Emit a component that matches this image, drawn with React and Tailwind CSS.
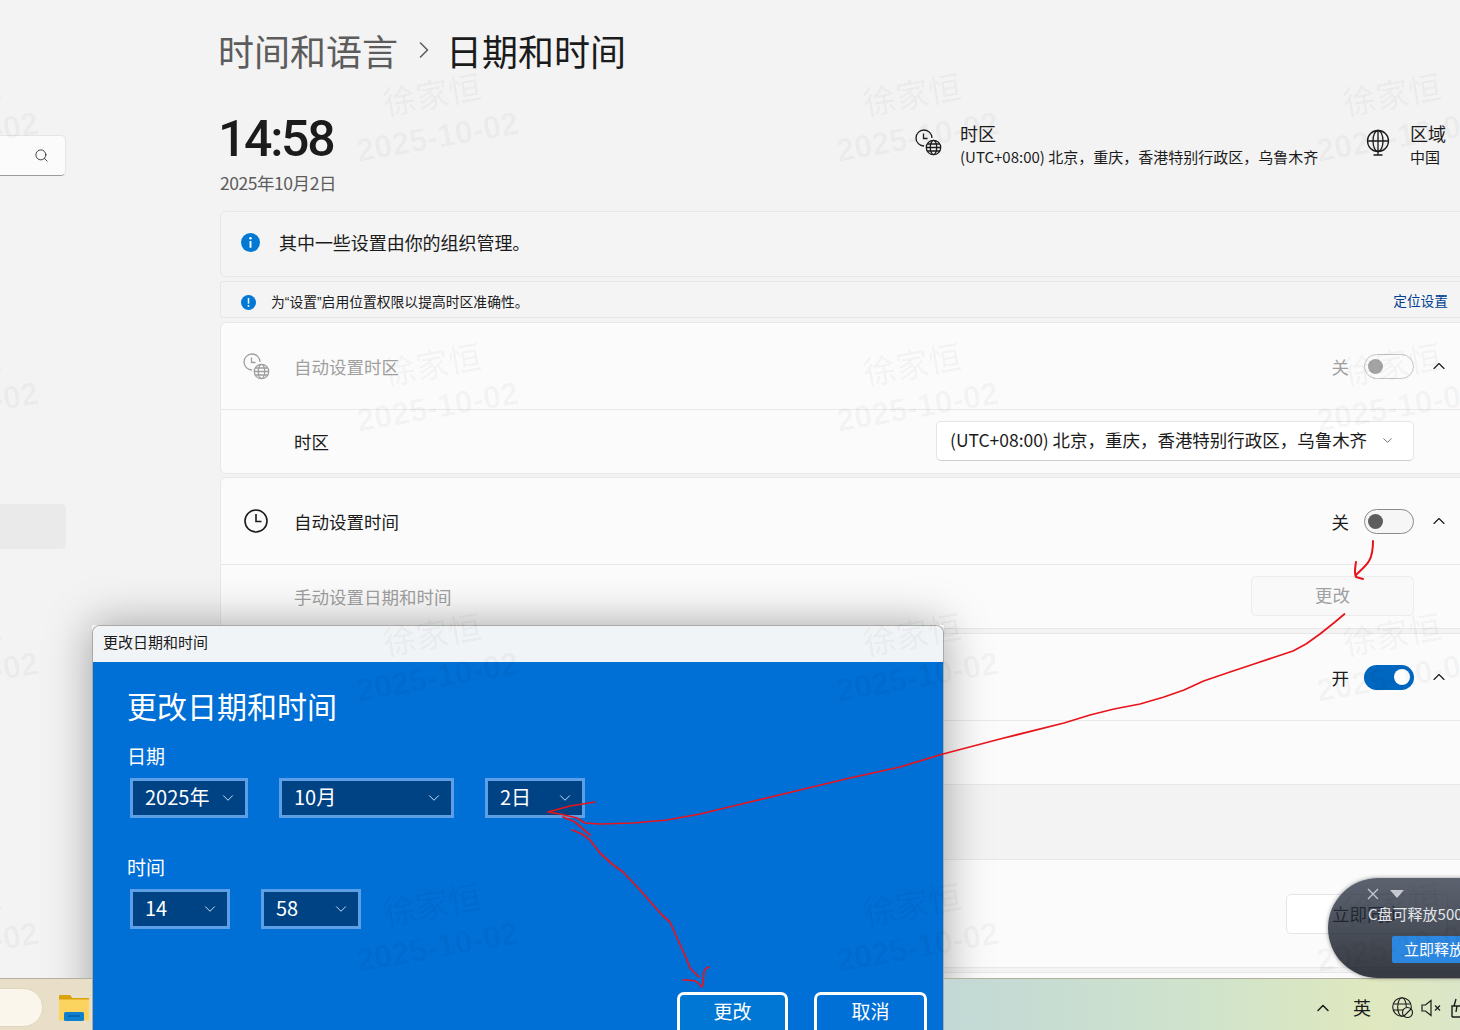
import React from 'react';
import { ChevronDown, ChevronUp, ChevronRight, Search } from 'lucide-react';

const InfoIcon = ({ size, bang }) => (
  <svg width={size} height={size} viewBox="0 0 20 20">
    <circle cx="10" cy="10" r="10" fill="#0078d4" />
    {bang ? (
      <>
        <rect x="9" y="4" width="2" height="7.5" fill="#fff" />
        <circle cx="10" cy="14.5" r="1.3" fill="#fff" />
      </>
    ) : (
      <>
        <circle cx="10" cy="5.6" r="1.3" fill="#fff" />
        <rect x="9" y="8.5" width="2" height="7" fill="#fff" />
      </>
    )}
  </svg>
);

const ClockGlobe = ({ color }) => (
  <svg width="27" height="27" viewBox="0 0 27 27" fill="none" stroke={color} strokeWidth="1.3">
    <path d="M9 17a8 8 0 1 1 8-8" />
    <path d="M8.5 4.5V9.5H12.5" />
    <circle cx="18.5" cy="18.5" r="7.2" />
    <ellipse cx="18.5" cy="18.5" rx="3.2" ry="7.2" />
    <path d="M11.3 18.5h14.4M12.4 15h12.2M12.4 22h12.2" />
  </svg>
);

const StandGlobe = () => (
  <svg width="26" height="28" viewBox="0 0 26 28" fill="none" stroke="#1b1b1b" strokeWidth="1.3">
    <circle cx="13" cy="12" r="10.5" />
    <ellipse cx="13" cy="12" rx="5" ry="10.5" />
    <path d="M13 1.5V26M2.5 12h21M8.5 26h9" />
  </svg>
);

const TimeIcon = () => (
  <svg width="26" height="26" viewBox="0 0 26 26" fill="none" stroke="#1b1b1b" strokeWidth="1.6">
    <circle cx="13" cy="13" r="11" />
    <path d="M13 6v7.5h5.5" />
  </svg>
);

const Toggle = ({ on, disabled }) => {
  if (on) {
    return (
      <span className="flex h-[25px] w-[50px] items-center justify-end rounded-full bg-[#0067c0] pr-[4px]">
        <span className="h-[16px] w-[16px] rounded-full bg-white" />
      </span>
    );
  }
  return (
    <span
      className={
        disabled
          ? 'flex h-[25px] w-[50px] items-center rounded-full border border-[#c4c4c4] bg-[#fbfbfb] pl-[3px]'
          : 'flex h-[25px] w-[50px] items-center rounded-full border border-[#8a8a8a] bg-[#f6f6f6] pl-[3px]'
      }
    >
      <span className={disabled ? 'h-[15px] w-[15px] rounded-full bg-[#a3a3a3]' : 'h-[15px] w-[15px] rounded-full bg-[#5d5d5d]'} />
    </span>
  );
};

const ToggleRow = ({ icon, label, state, on, disabled }) => (
  <div className="flex h-[87px] items-center border-b border-[#e8e8e8] pr-[30px]">
    <div className="w-[73px] pl-[22px]">{icon}</div>
    <span className={disabled ? 'mt-[2px] text-[17.5px] text-[#a0a0a0]' : 'mt-[2px] text-[17.5px] text-[#1b1b1b]'}>{label}</span>
    <span className={disabled ? 'ml-auto mt-[2px] text-[17.5px] text-[#a0a0a0]' : 'ml-auto mt-[2px] text-[17.5px] text-[#1b1b1b]'}>{state}</span>
    <span className="ml-[15px]">
      <Toggle on={on} disabled={disabled} />
    </span>
    <ChevronUp className="ml-[15px] text-[#1b1b1b]" size={20} strokeWidth={1.4} />
  </div>
);

const DlgSelect = ({ text, width, gap }) => (
  <div className={`flex h-[40px] items-center justify-between border-[3px] border-[#5c9fe6] bg-[#004385] pb-[2px] pl-[12px] pr-[8px] text-[20px] text-white ${width} ${gap}`}>
    <span>{text}</span>
    <ChevronDown size={18} strokeWidth={1.3} className="mt-[2px] text-[#cfe0f2]" />
  </div>
);

// watermark tiles repeat every 480 x 270
const marks = [];
for (let row = 0; row < 4; row++) {
  for (let col = 0; col < 4; col++) {
    marks.push({ x: col * 480 - 46, y: row * 270 + 95 });
  }
}

const Watermark = () => (
  <div className="pointer-events-none absolute inset-0 z-40 overflow-hidden">
    {marks.map((m, i) => (
      <div
        key={i}
        className="absolute flex h-[100px] w-[220px] -rotate-[10deg] flex-col items-center text-black/[0.035]"
        style={{ left: m.x - 109, top: m.y - 22 }}
      >
        <span className="ml-[4px] mt-[-2px] text-[33px] leading-[44px] font-medium">徐家恒</span>
        <span className="mt-[2px] text-[32px] leading-[40px] font-bold font-['Liberation_Sans',sans-serif]">2025-10-02</span>
      </div>
    ))}
  </div>
);

const Annotations = () => (
  <svg className="pointer-events-none absolute left-0 top-0 z-30" width="1460" height="1030" fill="none" stroke="#e8141c" strokeWidth="1.7" strokeLinecap="round" strokeLinejoin="round">
    <path d="M1373 541c0 10-1 15-4 20s-8 9-13 14" strokeWidth="2" />
    <path d="M1356 562c-1 6-2 11 0 15l7 2" strokeWidth="2" />
    <polyline points="1344.5,614 1335,622 1320,634 1306,644 1293,651 1275,657 1257,663 1230,672 1203.6,681 1184,690 1164,697 1140,704 1114,709 1090,715 1064,723 1000,739 943,754 900,767 850,778 800,790 750,802 700,814 667,820 633,823 600,824 585,823 577,818 560,814 548,812 570,806 595,802" />
    <polyline points="563,817 575,822 590,835" />
    <polyline points="572,830 582,834 590,840 600,853 612,864 623,872 640,890 662,915 670,922 678,940 687,960 690,968 699,977" />
    <path d="M683 980c6 0 12 0 14 2l5 5c2-5 1-10 2-14 0-3 2-5 5-6" />
  </svg>
);

export default function App() {
  return (
    <div className="relative flex h-[1030px] w-[1460px] flex-col overflow-hidden bg-[#f3f3f3] font-['Noto_Sans_CJK_SC','Noto_Sans',sans-serif] text-[#1b1b1b]">
      {/* settings window */}
      <div className="relative flex h-[978px] shrink-0 overflow-hidden">
        <aside className="w-[220px] shrink-0 pt-[135px]">
          <div className="flex h-[41px] w-[66px] items-center justify-end rounded-r-[5px] border border-l-0 border-[#e5e5e5] border-b-[#9a9a9a] bg-[#fbfbfb] pr-[16px]">
            <Search size={15} strokeWidth={1.3} />
          </div>
          <div className="mt-[328px] h-[45px] w-[66px] rounded-r-[5px] bg-[#eaeaea]" />
        </aside>

        <main className="w-[1260px] shrink-0 pt-[28px]">
          <div className="ml-[-2px] flex h-[44px] items-center text-[36px] leading-[44px]">
            <span className="text-[#5c5c5c]">时间和语言</span>
            <ChevronRight size={28} strokeWidth={1.3} className="ml-[12px] mr-[8px] text-[#5c5c5c]" />
            <span>日期和时间</span>
          </div>

          <div className="mt-[39px] flex h-[100px]">
            <div className="w-[695px]">
              <div className="ml-[-2px] h-[56px] text-[50px] font-medium leading-[56px] tracking-[-2.3px] font-['Roboto',sans-serif]">14:58</div>
              <div className="mt-[3px] text-[17.5px] leading-[26px] tracking-[-0.45px] text-[#5c5c5c]">2025年10月2日</div>
            </div>
            <div className="flex w-[45px] pt-[18px]">
              <ClockGlobe color="#1b1b1b" />
            </div>
            <div className="w-[405px] pt-[9px]">
              <div className="text-[18px] leading-[26px]">时区</div>
              <div className="mt-[1px] text-[15px] leading-[20px]">(UTC+08:00) 北京，重庆，香港特别行政区，乌鲁木齐</div>
            </div>
            <div className="w-[46px] pt-[18px]">
              <StandGlobe />
            </div>
            <div className="pt-[9px]">
              <div className="ml-[-1px] text-[18px] leading-[26px]">区域</div>
              <div className="ml-[-1px] mt-[1px] text-[15px] leading-[20px]">中国</div>
            </div>
          </div>

          <div className="flex h-[66px] items-center rounded-[6px] border border-[#e6e6e6] bg-[#f4f4f4] pb-[3px] pl-[20px] text-[18px]">
            <InfoIcon size={19} />
            <span className="ml-[19px] tracking-[-0.05px]">其中一些设置由你的组织管理。</span>
          </div>

          <div className="mt-[4px] flex h-[37px] items-center rounded-[3px] border border-[#e6e6e6] bg-[#f4f4f4] pl-[20px] pr-[31px] pt-[2px] text-[13.8px]">
            <span className="mt-[3px]">
              <InfoIcon size={15} bang />
            </span>
            <span className="ml-[15px] mt-[5px] font-['Liberation_Sans','Noto_Sans_CJK_SC',sans-serif]">为“设置”启用位置权限以提高时区准确性。</span>
            <span className="ml-auto text-[13.7px] text-[#003e92]">定位设置</span>
          </div>

          <div className="mt-[4px] h-[152px] rounded-[6px] border border-[#e8e8e8] bg-[#fbfbfb]">
            <ToggleRow icon={<ClockGlobe color="#9f9f9f" />} label="自动设置时区" state="关" disabled />
            <div className="flex h-[63px] items-center pb-[2px] pl-[73px] pr-[65px]">
              <span className="mt-[4px] text-[17.5px]">时区</span>
              <div className="ml-auto flex h-[40px] w-[478px] items-center justify-between rounded-[5px] border border-[#e5e5e5] border-b-[#cfcfcf] bg-white pl-[13px] pr-[18px] text-[17.5px] tracking-[-0.03px]">
                <span>(UTC+08:00) 北京，重庆，香港特别行政区，乌鲁木齐</span>
                <ChevronDown size={15} strokeWidth={1.4} className="text-[#5c5c5c]" />
              </div>
            </div>
          </div>

          <div className="mt-[3px] h-[152px] rounded-[6px] border border-[#e8e8e8] bg-[#fbfbfb]">
            <ToggleRow icon={<TimeIcon />} label="自动设置时间" state="关" />
            <div className="flex h-[63px] items-center pb-[2px] pl-[73px] pr-[65px]">
              <span className="mt-[4px] text-[17.5px] text-[#a0a0a0]">手动设置日期和时间</span>
              <div className="ml-auto flex h-[40px] w-[163px] items-center justify-center rounded-[5px] border border-[#ececec] bg-[#f9f9f9] text-[17.5px] text-[#a0a0a0]">更改</div>
            </div>
          </div>

          <div className="mt-[4px] h-[335px] rounded-[6px] border border-[#e8e8e8] bg-[#fbfbfb]">
            <ToggleRow label="" state="开" on />
            <div className="h-[64px] border-b border-[#e8e8e8]" />
            <div className="h-[75px] border-b border-[#e8e8e8] bg-[#f3f3f3]" />
            <div className="flex h-[107px] items-start pr-[31px] pt-[34px]">
              <div className="ml-auto flex h-[40px] w-[162px] items-center justify-center rounded-[5px] border border-[#e5e5e5] bg-white text-[17.5px]">立即同步</div>
            </div>
          </div>

          <div className="mt-[4px] h-[40px] rounded-t-[6px] border border-[#e8e8e8] bg-[#fbfbfb]" />
        </main>

        {/* dialog shadow stays on the settings window, the taskbar sits clear of it */}
        <div className="absolute left-[92px] top-[625px] h-[420px] w-[852px] shadow-[0_0_42px_rgba(0,0,0,0.35)]" />
      </div>

      {/* taskbar */}
      <div className="flex h-[52px] shrink-0 items-center border-t border-[#b4ae9e] bg-[linear-gradient(90deg,#e9dfc8_0%,#e6dfc8_30%,#c2d9d6_65%,#cfe3cc_82%,#dfe8bf_94%,#dbe6c9_100%)] pt-[6px]">
        <div className="ml-[-20px] h-[39px] w-[63px] rounded-full border border-[#e0d6bf] bg-[#faf6ec]" />
        <svg className="ml-[16px]" width="30" height="27" viewBox="0 0 30 27">
          <path d="M0 2.5a1 1 0 0 1 1-1h9l3 3h17v22H0z" fill="#fbd35f" />
          <path d="M0 2a1 1 0 0 1 1-1h10l2.500 3H30v1.500H0z" fill="#d9a20f" />
          <rect x="5" y="18" width="20" height="9" rx="1.500" fill="#0f7fd0" />
          <rect x="9" y="21.500" width="12" height="1" fill="#0a4f8c" />
        </svg>
        <div className="ml-auto flex items-center pr-[3px]">
          <ChevronUp size={20} strokeWidth={1.8} />
          <span className="ml-[20px] text-[18px]">英</span>
          <svg className="ml-[21px]" width="21" height="21" viewBox="0 0 21 21" fill="none" stroke="#1b1b1b" strokeWidth="1.1">
            <circle cx="10" cy="10" r="9.300" />
            <ellipse cx="10" cy="10" rx="4.300" ry="9.300" />
            <path d="M1 7h18M1 13h10" />
            <circle cx="15.500" cy="15.500" r="5" fill="#dbe6c9" />
            <path d="M12 19l7-7" />
          </svg>
          <svg className="ml-[8px]" width="22" height="18" viewBox="0 0 22 18" fill="none" stroke="#1b1b1b" strokeWidth="1.2">
            <path d="M1 6h3.500L10 1.500v15L4.500 12H1z" />
            <path d="M14 6.500l5 5M19 6.500l-5 5" />
          </svg>
          <svg className="ml-[8px] mr-[-4px]" width="10" height="22" viewBox="0 0 10 22" fill="none" stroke="#1b1b1b" strokeWidth="1.4">
            <path d="M1 20V9h9M1 20h9M5 2l-2 7h3l-1 6" />
          </svg>
        </div>
      </div>

      {/* change date and time window */}
      <div className="absolute left-[92px] top-[625px] z-10 h-[420px] w-[852px] overflow-hidden rounded-t-[8px] border border-b-0 border-[#a9a9a9]">
        <div className="flex h-[36px] items-center bg-[#f0f4f6] pb-[4px] pl-[10px] text-[15px]">更改日期和时间</div>
        <div className="h-[384px] bg-[#006fd6] pl-[34px] text-white">
          <div className="pt-[21px] text-[30px] leading-[44px]">更改日期和时间</div>
          <div className="mt-[16px] text-[19px] leading-[26px]">日期</div>
          <div className="ml-[3px] mt-[9px] flex">
            <DlgSelect text="2025年" width="w-[118px]" gap="mr-[31px]" />
            <DlgSelect text="10月" width="w-[175px]" gap="mr-[31px]" />
            <DlgSelect text="2日" width="w-[100px]" gap="" />
          </div>
          <div className="mt-[36px] text-[19px] leading-[26px]">时间</div>
          <div className="ml-[3px] mt-[9px] flex">
            <DlgSelect text="14" width="w-[100px]" gap="mr-[31px]" />
            <DlgSelect text="58" width="w-[100px]" gap="" />
          </div>
          <div className="ml-[550px] mt-[63px] flex gap-[26px] text-[19px]">
            <div className="flex h-[46px] w-[111px] items-start justify-center rounded-[7px] border-[3px] border-white bg-[#0077d4] pt-[2px]">更改</div>
            <div className="flex h-[46px] w-[113px] items-start justify-center rounded-[7px] border-[3px] border-white pt-[2px]">取消</div>
          </div>
        </div>
      </div>

      {/* cleanup popup */}
      <div className="absolute left-[1328px] top-[878px] z-20 h-[100px] w-[180px] rounded-l-[50px] bg-[linear-gradient(180deg,rgba(52,61,77,0.8),rgba(5,10,20,0.8))] shadow-[0_0_4px_rgba(0,0,0,0.4)]">
        <div className="ml-[39px] mt-[9px] flex h-[14px] items-center gap-[11px] text-[#c9ccd2]">
          <svg width="12" height="12" viewBox="0 0 12 12" stroke="currentColor" strokeWidth="1.2">
            <path d="M1 1l10 10M11 1L1 11" />
          </svg>
          <svg width="14" height="8" viewBox="0 0 14 8" fill="currentColor">
            <path d="M0 0h14L7 8z" />
          </svg>
        </div>
        <div className="ml-[40px] mt-[3px] whitespace-nowrap text-[15px] leading-[20px] text-[#e4e6ea]">C盘可释放500</div>
        <div className="ml-[64px] mt-[12px] flex h-[27px] w-[110px] items-center whitespace-nowrap rounded-[2px] bg-[#2b87e0] pl-[12px] text-[15px] text-white">立即释放</div>
      </div>

      <Annotations />
      <Watermark />
    </div>
  );
}
